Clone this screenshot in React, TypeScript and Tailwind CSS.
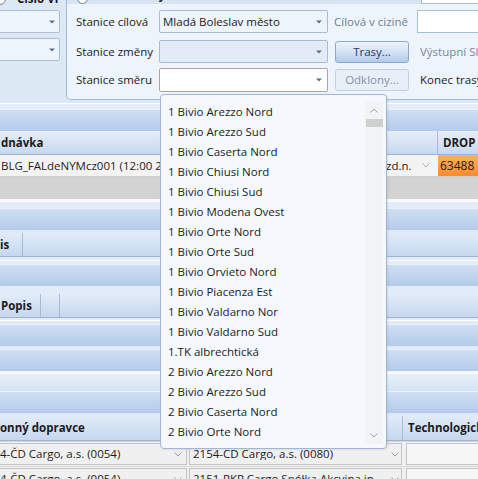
import React from "react";

const items = [
  "1 Bivio Arezzo Nord",
  "1 Bivio Arezzo Sud",
  "1 Bivio Caserta Nord",
  "1 Bivio Chiusi Nord",
  "1 Bivio Chiusi Sud",
  "1 Bivio Modena Ovest",
  "1 Bivio Orte Nord",
  "1 Bivio Orte Sud",
  "1 Bivio Orvieto Nord",
  "1 Bivio Piacenza Est",
  "1 Bivio Valdarno Nor",
  "1 Bivio Valdarno Sud",
  "1.TK albrechtická",
  "2 Bivio Arezzo Nord",
  "2 Bivio Arezzo Sud",
  "2 Bivio Caserta Nord",
  "2 Bivio Orte Nord",
];

function Tri() {
  return (
    <svg width="6" height="4" viewBox="0 0 6 4" className="shrink-0">
      <path d="M0 0.5 L6 0.5 L3 3.5 Z" fill="#56708f" />
    </svg>
  );
}

function Chev({ up = false, color = "#9a9a9a" }: { up?: boolean; color?: string }) {
  return (
    <svg width="8" height="5" viewBox="0 0 8 5" className="shrink-0">
      <path d={up ? "M0.5 4.5 L4 1 L7.5 4.5" : "M0.5 0.5 L4 4 L7.5 0.5"} fill="none" stroke={color} strokeWidth="1" />
    </svg>
  );
}

function Band() {
  return <div className="h-[22px] shrink-0 border-t border-[#e9f1fa] bg-linear-to-b from-[#cfdff3] to-[#b3cbea]" />;
}

export default function App() {
  return (
    <div className="relative w-[478px] h-[479px] overflow-hidden bg-[#dde8f5] font-['Open_Sans','Noto_Sans',sans-serif] text-[11.5px] text-[#1b1b1b] leading-none">
      {/* top area */}
      <div className="flex h-[100px]">
        <div className="w-[66px] shrink-0 flex flex-col">
          <div className="h-[6px] overflow-hidden">
            <div className="-mt-[8px] flex items-center h-[14px]">
              <div className="-ml-[6px] w-[12px] h-[12px] rounded-full border border-[#6f8299] bg-white" />
              <span className="ml-[11px] font-bold">Číslo Vl</span>
            </div>
          </div>
          <div className="mt-[4px] h-[23px] w-[60px] flex items-center justify-end pr-[4px] border border-l-0 border-[#aabdd6] bg-[#eef4fb] rounded-r-[2px]">
            <Tri />
          </div>
          <div className="mt-[5px] h-[23px] w-[60px] flex items-center justify-end pr-[4px] border border-l-0 border-[#aabdd6] bg-[#eef4fb] rounded-r-[2px]">
            <Tri />
          </div>
        </div>
        <div className="flex-1 h-[100px] border-l border-b border-[#a3b8d5] rounded-bl-[5px] bg-[#eef4fb] flex flex-col">
          <div className="h-[4px] overflow-hidden bg-[#d7e3f2] relative">
            <div className="-mt-[12px] flex items-center h-[14px] pl-[10px]">
              <div className="w-[11px] h-[11px] mt-[6px] rounded-full border border-[#6f8299] bg-white" />
              <span className="ml-[6px] font-bold">Zadání trasy</span>
            </div>
            <div className="absolute right-0 top-0 w-[61px] h-[4px] bg-white border-b border-l border-[#aabdd6]" />
          </div>
          <div className="mt-[6px] h-[23px] flex items-center pl-[9px]">
            <span className="w-[83px] shrink-0">Stanice cílová</span>
            <div className="w-[169px] h-[23px] shrink-0 flex items-center justify-between pl-[3px] pr-[5px] border border-[#a9bbd4] bg-[#eef4fb] rounded-[2px]">
              <span>Mladá Boleslav město</span>
              <Tri />
            </div>
            <span className="ml-[6px] w-[83px] shrink-0 text-[#6e7e92]">Cílová v cizině</span>
            <div className="flex-1 h-[23px] bg-white border border-r-0 border-[#aabdd6]" />
          </div>
          <div className="mt-[7px] h-[23px] flex items-center pl-[9px]">
            <span className="w-[83px] shrink-0">Stanice změny</span>
            <div className="w-[169px] h-[23px] shrink-0 flex items-center justify-end pr-[5px] border border-[#a9bbd4] bg-[#e2ebf6] rounded-[2px]">
              <Tri />
            </div>
            <button className="ml-[7px] w-[74px] h-[22px] shrink-0 rounded-[3px] border border-[#8ea9cb] bg-linear-to-b from-[#edf3fb] via-[#d3e1f3] to-[#b4cbe9] text-[#1f3c63] text-[11.5px]">
              Trasy...
            </button>
            <span className="ml-[11px] text-[#7a8696] whitespace-nowrap">Výstupní Sl</span>
          </div>
          <div className="mt-[5px] h-[23px] flex items-center pl-[9px]">
            <span className="w-[83px] shrink-0">Stanice směru</span>
            <div className="w-[169px] h-[24px] shrink-0 flex items-center justify-end pr-[5px] border border-[#b7a196] bg-white rounded-[2px]">
              <Tri />
            </div>
            <button className="ml-[7px] w-[74px] h-[22px] shrink-0 rounded-[3px] border border-[#c0cfe2] bg-[#e8eff8] text-[#8593a6] text-[11.5px]">
              Odklony...
            </button>
            <span className="ml-[11px] whitespace-nowrap">Konec trasy</span>
          </div>
        </div>
      </div>

      {/* grids */}
      <div className="flex flex-col">
        <div className="h-[9px] shrink-0 flex flex-col">
          <div className="h-[3px] bg-[#dde8f5]" />
          <div className="h-[1px] bg-white" />
          <div className="h-[5px] bg-[#e4edf8]" />
        </div>
        <Band />
        <div className="h-[24px] shrink-0 flex font-bold bg-linear-to-b from-[#e6eef9] to-[#c7d9ef] border-b border-[#9db3d0]">
          <div className="w-[438px] shrink-0 flex items-center border-r border-[#a7bbd6] pl-[1px]">dnávka</div>
          <div className="flex-1 flex items-center pl-[5px] whitespace-nowrap">DROP ID</div>
        </div>
        <div className="h-[22px] shrink-0 flex bg-[#f3f3f3] border-b border-[#cfcfcf]">
          <div className="w-[384px] shrink-0 flex items-center pl-[1px] overflow-hidden whitespace-nowrap">BLG_FALdeNYMcz001 (12:00 29.09.)</div>
          <div className="w-[54px] shrink-0 flex items-center justify-between pl-[2px] pr-[8px]">
            <span>zd.n.</span>
            <Chev color="#b0b0b0" />
          </div>
          <div className="flex-1 flex items-center pl-[2px] bg-linear-to-b from-[#ffb15c] to-[#ff8a2a] text-[12px]">63488</div>
        </div>
        <div className="h-[22px] shrink-0 bg-[#d3d3d3]" />
        <div className="h-[9px] shrink-0 flex flex-col">
          <div className="h-[2px] bg-[#f4f8fc]" />
          <div className="h-[1px] bg-white" />
          <div className="h-[6px] bg-[#e2ebf7]" />
        </div>
        <Band />
        <div className="h-[3px] shrink-0 bg-[#dfe9f5]" />
        <div className="h-[24px] shrink-0 flex font-bold bg-linear-to-b from-[#e2ecf8] to-[#c5d7ee] border-b border-[#9db3d0]">
          <div className="w-[23px] shrink-0 flex items-center border-r border-[#a7bbd6]">is</div>
          <div className="flex-1" />
        </div>
        <div className="h-[7px] shrink-0 flex flex-col">
          <div className="h-[3px] bg-[#e2ebf7]" />
          <div className="h-[1px] bg-white" />
          <div className="h-[3px] bg-[#e2ebf7]" />
        </div>
        <Band />
        <div className="h-[8px] shrink-0 bg-[#e2ebf7]" />
        <div className="h-[24px] shrink-0 flex font-bold bg-linear-to-b from-[#e2ecf8] to-[#c5d7ee] border-b border-[#9db3d0]">
          <div className="w-[41px] shrink-0 flex items-center border-r border-[#a7bbd6] pl-[1px]">Popis</div>
          <div className="w-[19px] shrink-0 border-r border-[#a7bbd6]" />
          <div className="flex-1" />
        </div>
        <div className="h-[6px] shrink-0 flex flex-col">
          <div className="h-[2px] bg-[#e2ebf7]" />
          <div className="h-[1px] bg-white" />
          <div className="h-[3px] bg-[#e2ebf7]" />
        </div>
        <Band />
        <div className="h-[3px] shrink-0 bg-[#e2ebf7]" />
        <Band />
        <div className="h-[20px] shrink-0 flex flex-col">
          <div className="h-[2px] bg-[#f4f8fc]" />
          <div className="h-[1px] bg-white" />
          <div className="h-[17px] bg-linear-to-b from-[#e8f0fa] to-[#d6e4f4]" />
        </div>
        <Band />
        <div className="h-[3px] shrink-0 bg-[#dfe9f5]" />
        <div className="h-[25px] shrink-0 flex font-bold bg-linear-to-b from-[#e2ecf8] to-[#c5d7ee] border-b border-[#9db3d0]">
          <div className="w-[187px] shrink-0 flex items-center border-r border-[#a7bbd6] whitespace-nowrap">onný dopravce</div>
          <div className="w-[216px] shrink-0 border-r border-[#a7bbd6]" />
          <div className="flex-1 flex items-center pl-[5px] whitespace-nowrap overflow-hidden">Technologický</div>
        </div>
        {[
          ["4-ČD Cargo, a.s. (0054)", "2154-CD Cargo, a.s. (0080)"],
          ["4-ČD Cargo, a.s. (0054)", "2151-PKP Cargo Spółka Akcyjna in"],
        ].map(([a, b], i) => (
          <div key={i} className="h-[25px] shrink-0 flex bg-[#f0f0f0] border-t border-[#d8d8d8] pt-[1px] gap-[2px]">
            <div className="w-[187px] h-[22px] shrink-0 flex items-center justify-between pr-[4px] border border-l-0 border-[#c4c4c4] bg-[#f0f0f0] whitespace-nowrap">
              <span>{a}</span>
              <Chev />
            </div>
            <div className="w-[213px] h-[22px] shrink-0 flex items-center justify-between pl-[3px] pr-[2px] border border-[#c4c4c4] bg-[#f0f0f0] whitespace-nowrap overflow-hidden">
              <span className="overflow-hidden">{b}</span>
              <Chev />
            </div>
            <div className="flex-1 ml-[2px] h-[22px] border border-r-0 border-[#c4c4c4] bg-[#f7f7f7]" />
          </div>
        ))}
      </div>

      {/* dropdown list overlay */}
      <div className="absolute left-[160px] top-[94px] w-[227px] h-[355px] rounded-[4px] border border-[#9fb6d6] bg-[#f5f9fe] shadow-[1px_1px_2px_rgba(0,0,0,0.08)]">
        <div className="pt-[7px] flex flex-col">
          {items.map((t) => (
            <div key={t} className="h-[20px] flex items-center pl-[7px] whitespace-nowrap">
              {t}
            </div>
          ))}
        </div>
        <div className="absolute right-[3px] top-[7px] bottom-[4px] w-[18px] bg-[#f1f3f5] flex flex-col items-center">
          <div className="h-[17px] flex items-center justify-center">
            <Chev up color="#a3a3a3" />
          </div>
          <div className="w-[17px] h-[8px] bg-[#cfcfcf]" />
          <div className="flex-1" />
          <div className="h-[17px] flex items-center justify-center">
            <Chev color="#a3a3a3" />
          </div>
        </div>
      </div>
    </div>
  );
}
